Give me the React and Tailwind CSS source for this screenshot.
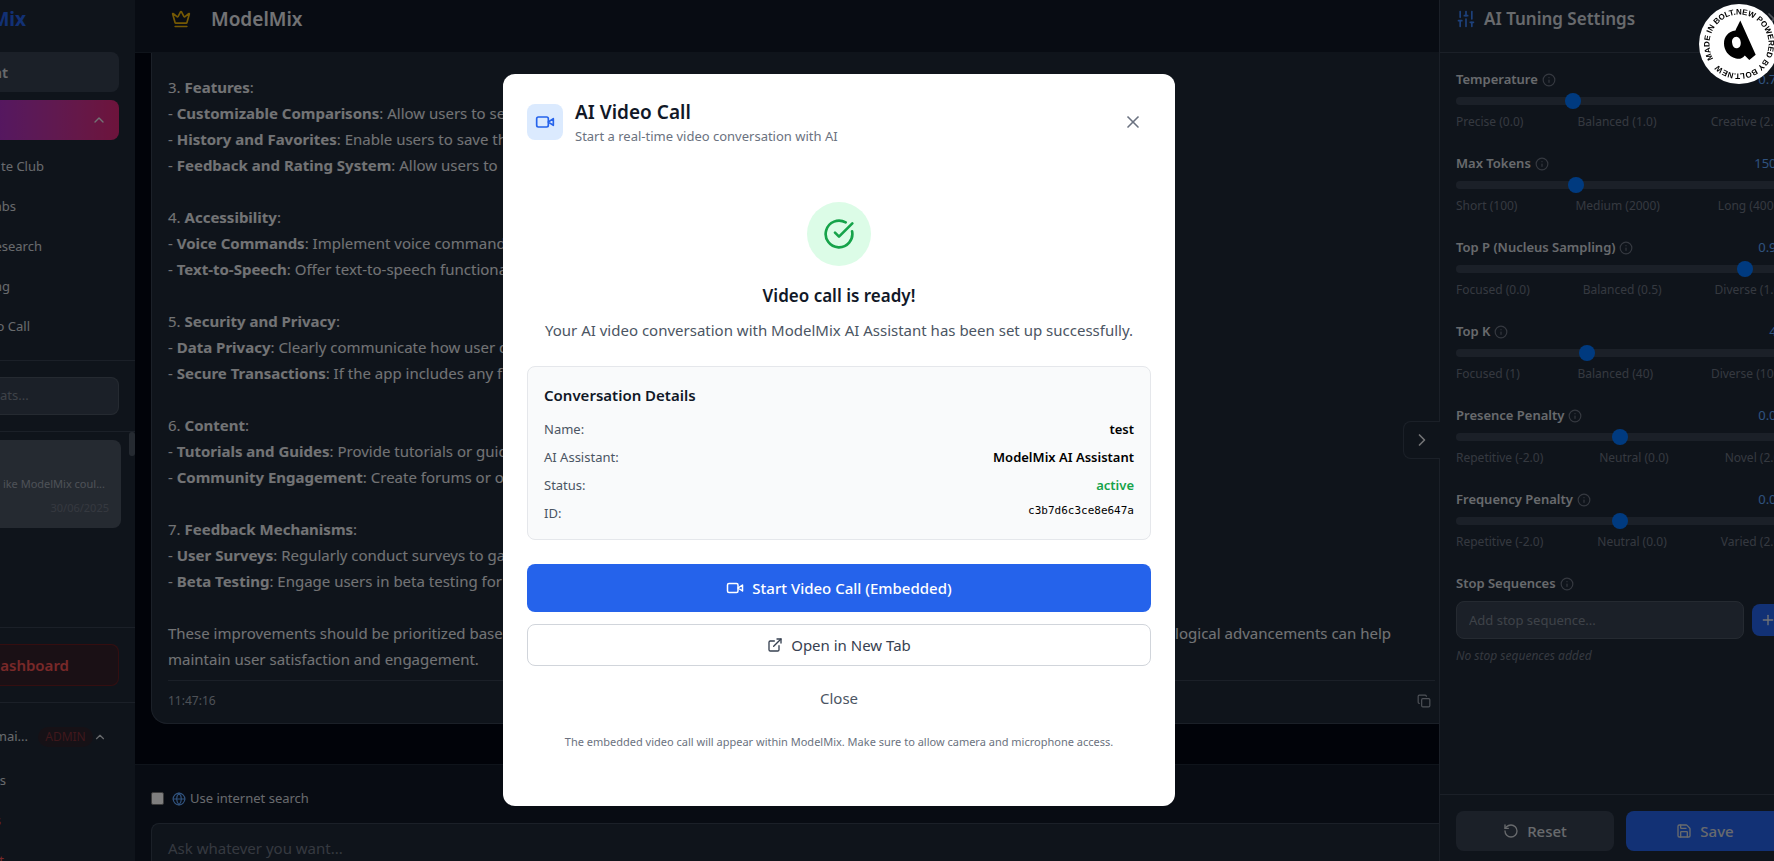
import React, { useState } from 'react';
import {
    ChevronRight,
    ChevronUp,
    CircleCheckBig,
    Copy,
    Crown,
    ExternalLink,
    Globe,
    Info,
    Plus,
    RotateCcw,
    Save,
    SlidersVertical,
    X,
} from 'lucide-react';

const navItems = [
    { label: 'te Club', width: 'w-[44px]' },
    { label: 'abs', width: 'w-[16px]' },
    { label: 'esearch', width: 'w-[42px]' },
    { label: 'ng', width: 'w-[10px]' },
    { label: 'o Call', width: 'w-[30px]' },
];

const sections = [
    { title: '3. ', name: 'Features', items: [
        ['Customizable Comparisons', 'Allow users to select'],
        ['History and Favorites', 'Enable users to save their'],
        ['Feedback and Rating System', 'Allow users to'],
    ] },
    { title: '4. ', name: 'Accessibility', items: [
        ['Voice Commands', 'Implement voice commands'],
        ['Text-to-Speech', 'Offer text-to-speech functionality'],
    ] },
    { title: '5. ', name: 'Security and Privacy', items: [
        ['Data Privacy', 'Clearly communicate how user data'],
        ['Secure Transactions', 'If the app includes any financial'],
    ] },
    { title: '6. ', name: 'Content', items: [
        ['Tutorials and Guides', 'Provide tutorials or guides'],
        ['Community Engagement', 'Create forums or other'],
    ] },
    { title: '7. ', name: 'Feedback Mechanisms', items: [
        ['User Surveys', 'Regularly conduct surveys to gather'],
        ['Beta Testing', 'Engage users in beta testing for'],
    ] },
];

const params = [
    { id: 'temperature', label: 'Temperature', value: 0.7, text: '0.70', min: 0, max: 2, step: 0.1, marks: ['Precise (0.0)', 'Balanced (1.0)', 'Creative (2.0)'] },
    { id: 'max-tokens', label: 'Max Tokens', value: 1500, text: '1500', min: 100, max: 4000, step: 100, marks: ['Short (100)', 'Medium (2000)', 'Long (4000)'] },
    { id: 'top-p', label: 'Top P (Nucleus Sampling)', value: 0.9, text: '0.90', min: 0, max: 1, step: 0.05, marks: ['Focused (0.0)', 'Balanced (0.5)', 'Diverse (1.0)'] },
    { id: 'top-k', label: 'Top K', value: 40, text: '40', min: 1, max: 100, step: 1, marks: ['Focused (1)', 'Balanced (40)', 'Diverse (100)'] },
    { id: 'presence', label: 'Presence Penalty', value: 0, text: '0.00', min: -2, max: 2, step: 0.1, marks: ['Repetitive (-2.0)', 'Neutral (0.0)', 'Novel (2.0)'] },
    { id: 'frequency', label: 'Frequency Penalty', value: 0, text: '0.00', min: -2, max: 2, step: 0.1, marks: ['Repetitive (-2.0)', 'Neutral (0.0)', 'Varied (2.0)'] },
];

const VideoIcon = ({ size, className }) => (
    <svg
        width={size}
        height={size}
        viewBox="0 0 24 24"
        fill="none"
        stroke="currentColor"
        strokeWidth="2"
        strokeLinecap="round"
        strokeLinejoin="round"
        className={className}
    >
        <path d="m22 8-6 4 6 4V8Z" />
        <rect width="14" height="12" x="2" y="6" rx="2" ry="2" />
    </svg>
);

const Sidebar = () => (
    <aside className="flex w-[135px] shrink-0 flex-col overflow-hidden bg-[#1f2937] whitespace-nowrap">
        <div className="flex h-[52px] shrink-0 items-center pb-[14px]">
            <span className="flex w-[26px] justify-end text-[19px] font-bold text-[#2563eb]">Mix</span>
        </div>

        <div className="flex flex-col gap-2 pr-4">
            <button className="flex h-10 items-center rounded-r-lg bg-[#374151]">
                <span className="flex w-2 justify-end text-[15px] font-semibold text-[#d1d5db]">at</span>
            </button>
            <button className="flex h-10 items-center justify-end rounded-r-lg bg-linear-to-r from-[#ab2fc0] to-[#db2777] pr-3" aria-label="Collapse tools">
                <ChevronUp size={16} className="text-[#e5e7eb]" />
            </button>
        </div>
        <nav className="mt-[7px] flex flex-col">
            {navItems.map((item) => (
                <a key={item.label} href="#" className="flex h-10 items-center text-[13px] text-[#d1d5db]">
                    <span className={`flex justify-end ${item.width}`}>{item.label}</span>
                </a>
            ))}
        </nav>

        <div className="mt-[13px] border-y border-[#374151] py-4 pr-4">
            <div className="flex h-[38px] items-center overflow-hidden rounded-r-lg border border-l-0 border-[#4b5563] bg-[#374151]">
                <input
                    type="text"
                    aria-label="Search chats"
                    placeholder="ats..."
                    className="w-full text-[13px] text-white outline-none placeholder:text-[#7d8592]"
                />
            </div>
        </div>

        <div className="flex flex-1 justify-between">
            <div className="mt-2 flex h-[88px] w-[121px] flex-col items-end rounded-r-lg bg-[#4b5563] pt-9 pr-3 text-[11px]">
                <span className="pr-1 leading-4 text-[#9ca3af]">ike ModelMix coul...</span>
                <span className="mt-2 leading-4 text-[#6b7280]">30/06/2025</span>
            </div>
            <div className="h-6 w-[6px] rounded-full bg-[#4b5563]" />
        </div>

        <div className="border-y border-[#374151] py-4 pr-4">
            <button className="flex h-[42px] w-full items-center rounded-r-lg border border-l-0 border-[#7f1d1d]/70 bg-[#35202a]">
                <span className="flex w-[69px] justify-end text-[15px] font-semibold text-[#f05252]">Dashboard</span>
            </button>
        </div>

        <div className="flex h-[158px] shrink-0 flex-col overflow-hidden pt-[18px] text-[13px] text-[#d1d5db]">
            <button className="flex h-8 shrink-0 items-center">
                <span className="flex w-7 justify-end">mai...</span>
                <span className="ml-[10px] flex h-5 w-[55px] items-center justify-center rounded-full bg-[#2c222d] text-[12px] text-[#803038]">ADMIN</span>
                <ChevronUp size={14} className="text-[#d1d5db]" />
            </button>
            <a href="#" className="mt-2 flex h-10 shrink-0 items-center"><span className="flex w-[6px] justify-end">s</span></a>
            <a href="#" className="flex h-10 shrink-0 items-center text-[#f05252]"><span className="flex w-px justify-end">s</span></a>
            <a href="#" className="flex h-10 shrink-0 items-center text-[#f05252]"><span className="flex w-1 justify-end">t</span></a>
        </div>
    </aside>
);

const Chat = () => {
    const [search, setSearch] = useState(false);

    return (
        <main className="flex min-w-0 flex-1 flex-col overflow-hidden bg-[#030712]">
            <header className="flex h-[53px] shrink-0 items-center border-b border-[#1f2937] bg-[#111827] pb-[14px] pl-9">
                <Crown size={20} className="text-[#eab308]" />
                <h1 className="ml-5 text-[19px] font-semibold text-[#e5e7eb]">ModelMix</h1>
            </header>

            <div className="flex flex-1 flex-col overflow-hidden pl-4">
                <article className="rounded-bl-2xl border-b border-l border-[#374151] bg-[#1f2937] pt-[21px] pr-1 pl-4 text-[15px] leading-[26px] text-[#e5e7eb]">
                    {sections.map((s) => (
                        <div key={s.name} className="mb-[26px]">
                            <p>{s.title}<strong>{s.name}</strong>:</p>
                            {s.items.map(([name, text]) => (
                                <p key={name}>- <strong>{name}</strong>: {text}</p>
                            ))}
                        </div>
                    ))}
                    <div className="flex justify-between pr-[44px] whitespace-nowrap">
                        <span>These improvements should be prioritized based</span>
                        <span>on user needs and how technological advancements can help</span>
                    </div>
                    <p>maintain user satisfaction and engagement.</p>
                    <footer className="mt-2 flex h-[43px] items-center justify-between border-t border-[#374151] pr-1 pb-[2px] text-[12px] text-[#9ca3af]">
                        <time>11:47:16</time>
                        <button aria-label="Copy message"><Copy size={14} /></button>
                    </footer>
                </article>
            </div>

            <div className="h-[97px] shrink-0 border-t border-[#1f2937] bg-[#111827] pl-4">
                <label className="flex h-[58px] items-center pt-[9px] text-[13px] text-[#d1d5db]">
                    <input
                        type="checkbox"
                        checked={search}
                        onChange={(e) => setSearch(e.target.checked)}
                        className="mr-2 h-[13px] w-[13px] appearance-none rounded-[2px] border border-[#767676] bg-white"
                    />
                    <Globe size={14} className="mr-1 text-[#60a5fa]" />
                    Use internet search
                </label>
                <textarea
                    aria-label="Message"
                    placeholder="Ask whatever you want..."
                    className="block h-[60px] w-full resize-none rounded-tl-lg border-t border-l border-[#374151] bg-[#1f2937] px-4 py-[13px] text-[15px] text-white outline-none placeholder:text-[#6b7280]"
                />
            </div>
        </main>
    );
};

const ParamSlider = ({ param }) => {
    const [value, setValue] = useState(param.value);

    return (
        <div className="flex h-[60px] flex-col">
            <div className="flex h-5 items-center justify-between text-[13px]">
                <label htmlFor={param.id} className="flex items-center gap-1 font-semibold text-[#d1d5db]">
                    {param.label}
                    <Info size={14} className="text-[#6b7280]" />
                </label>
                <span className="text-[#60a5fa]">{param.text}</span>
            </div>
            <input
                id={param.id}
                type="range"
                min={param.min}
                max={param.max}
                step={param.step}
                value={value}
                onChange={(e) => setValue(Number(e.target.value))}
                className="mt-[7px] h-2 w-full appearance-none rounded-lg bg-[#374151] [&::-webkit-slider-thumb]:h-4 [&::-webkit-slider-thumb]:w-4 [&::-webkit-slider-thumb]:appearance-none [&::-webkit-slider-thumb]:rounded-full [&::-webkit-slider-thumb]:bg-[#0075ff]"
            />
            <div className="mt-[9px] flex justify-between text-[12px] leading-4 text-[#6b7280]">
                {param.marks.map((m) => <span key={m}>{m}</span>)}
            </div>
        </div>
    );
};

const TuningPanel = () => (
    <div className="relative w-[335px] shrink-0">
        <button
            aria-label="Hide settings"
            className="absolute top-[421px] right-full -mr-px flex h-[38px] w-[37px] items-center justify-center rounded-l-lg border border-r-0 border-[#374151] bg-[#1f2937] text-[#e5e7eb]"
        >
            <ChevronRight size={20} />
        </button>
        <div className="h-full overflow-hidden">
            <aside className="flex h-full w-[361px] flex-col border-l border-[#374151] bg-[#1f2937]">
                <div className="flex h-[53px] shrink-0 items-center border-b border-[#374151] px-4 pb-[14px]">
                    <SlidersVertical size={20} className="text-[#3b82f6]" />
                    <h2 className="ml-2 flex-1 text-[17px] font-semibold text-[#d1d5db]">AI Tuning Settings</h2>
                    <button aria-label="Close settings" className="text-[#9ca3af]"><X size={20} /></button>
                </div>

                <div className="flex flex-1 flex-col gap-6 px-4 pt-[17px]">
                    {params.map((p) => <ParamSlider key={p.id} param={p} />)}
                    <div>
                        <label htmlFor="stop" className="flex h-5 items-center gap-1 text-[13px] font-semibold text-[#d1d5db]">
                            Stop Sequences
                            <Info size={14} className="text-[#6b7280]" />
                        </label>
                        <div className="mt-[7px] flex items-center gap-2">
                            <input
                                id="stop"
                                type="text"
                                placeholder="Add stop sequence..."
                                className="h-[38px] min-w-0 flex-1 rounded-lg border border-[#4b5563] bg-[#374151] px-3 text-[13px] text-white outline-none placeholder:text-[#7d8592]"
                            />
                            <button aria-label="Add" className="flex h-8 w-8 items-center justify-center rounded-lg bg-[#2563eb] text-[#e5e7eb]">
                                <Plus size={16} />
                            </button>
                        </div>
                        <p className="mt-[9px] text-[12px] leading-4 text-[#6b7280] italic">No stop sequences added</p>
                    </div>
                </div>

                <div className="flex h-[67px] shrink-0 gap-3 border-t border-[#374151] px-4 pt-4 text-[15px] font-medium text-[#d1d5db]">
                    <button className="flex h-10 flex-1 items-center justify-center gap-2 rounded-lg bg-[#374151]">
                        <RotateCcw size={16} />
                        Reset
                    </button>
                    <button className="flex h-10 flex-1 items-center justify-center gap-2 rounded-lg bg-[#2563eb]">
                        <Save size={16} />
                        Save
                    </button>
                </div>
            </aside>
        </div>
    </div>
);

const VideoCallModal = () => (
    <div className="fixed inset-0 z-50 flex items-center justify-center bg-black/50 pt-[19px] pr-24">
        <div role="dialog" aria-labelledby="call-title" className="w-full max-w-2xl rounded-xl bg-white px-6 pt-6 pb-14">
            <div className="flex h-12 items-center">
                <div className="flex h-9 w-9 items-center justify-center rounded-lg bg-[#dbeafe]">
                    <VideoIcon size={20} className="text-[#2563eb]" />
                </div>
                <div className="ml-3 flex-1">
                    <h2 id="call-title" className="text-[19px] leading-7 font-semibold text-[#111827]">AI Video Call</h2>
                    <p className="text-[13px] leading-5 text-[#6b7280]">Start a real-time video conversation with AI</p>
                </div>
                <button aria-label="Close dialog" className="p-2 text-[#6b7280]"><X size={20} /></button>
            </div>

            <div className="mt-14 flex flex-col items-center">
                <div className="flex h-16 w-16 items-center justify-center rounded-full bg-[#dcfce7]">
                    <CircleCheckBig size={32} className="text-[#16a34a]" />
                </div>
                <h3 className="mt-4 text-[17px] leading-7 font-semibold text-[#111827]">Video call is ready!</h3>
                <p className="mt-2 text-[15px] leading-6 text-[#4b5563]">
                    Your AI video conversation with ModelMix AI Assistant has been set up successfully.
                </p>
            </div>

            <section className="mt-6 rounded-lg border border-[#e5e7eb] bg-[#f9fafb] p-4">
                <h4 className="mb-3 text-[15px] leading-6 font-semibold text-[#111827]">Conversation Details</h4>
                <dl className="flex flex-col gap-2 text-[13px] leading-5">
                    <div className="flex justify-between">
                        <dt className="text-[#4b5563]">Name:</dt>
                        <dd className="font-semibold text-black">test</dd>
                    </div>
                    <div className="flex justify-between">
                        <dt className="text-[#4b5563]">AI Assistant:</dt>
                        <dd className="font-semibold text-black">ModelMix AI Assistant</dd>
                    </div>
                    <div className="flex justify-between">
                        <dt className="text-[#4b5563]">Status:</dt>
                        <dd className="font-semibold text-[#16a34a]">active</dd>
                    </div>
                    <div className="flex justify-between">
                        <dt className="text-[#4b5563]">ID:</dt>
                        <dd className="font-['DejaVu_Sans_Mono',monospace] text-[11px] leading-4 text-black">c3b7d6c3ce8e647a</dd>
                    </div>
                </dl>
            </section>

            <div className="mt-6 flex flex-col gap-3 text-[15px]">
                <button className="flex h-12 items-center justify-center gap-2 rounded-lg bg-[#2563eb] font-medium text-white">
                    <VideoIcon size={18} />
                    Start Video Call (Embedded)
                </button>
                <button className="flex h-[42px] items-center justify-center gap-2 rounded-lg border border-[#d1d5db] text-[#374151]">
                    <ExternalLink size={16} />
                    Open in New Tab
                </button>
                <button className="h-10 text-[#4b5563]">Close</button>
            </div>
            <p className="mt-4 text-center text-[11px] leading-4 text-[#6b7280]">
                The embedded video call will appear within ModelMix. Make sure to allow camera and microphone access.
            </p>
        </div>
    </div>
);

const BoltBadge = () => (
    <a href="#" aria-label="Made in Bolt" className="fixed top-1 -right-[5px] z-60">
        <svg width="80" height="80" viewBox="0 0 80 80">
            <circle cx="40" cy="40" r="40" fill="#fff" />
            <path id="ring" d="M40 10.5a29.5 29.5 0 0 1 0 59a29.5 29.5 0 0 1 0-59" transform="rotate(-120 40 40)" fill="none" />
            <text className="font-['Liberation_Sans',sans-serif] text-[8px] font-bold" fill="#000">
                <textPath href="#ring">MADE IN BOLT.NEW POWERED BY BOLT.NEW</textPath>
            </text>
            <path
                fillRule="evenodd"
                d="M41.300 16.500L56.700 50.700L50.300 56L45.800 51.500C43.500 54.800 40 55.300 37 54.500C29 52.500 25 46 25 39.500C25 33 29 27.500 36.500 26.500C37.500 23.500 39.500 20.500 41.300 16.500ZM37.500 32.800C34 32.800 32.800 36 33.100 38.700C33.500 42.500 35.500 44.500 38 44.300C41 44 42 41 41.700 38C41.300 35 39.800 32.800 37.500 32.800Z"
                fill="#000"
            />
        </svg>
    </a>
);

export default function App() {
    return (
        <div className="flex h-screen overflow-hidden bg-[#030712] font-['Noto_Sans','Open_Sans',sans-serif]">
            <Sidebar />
            <Chat />
            <TuningPanel />
            <VideoCallModal />
            <BoltBadge />
        </div>
    );
}
